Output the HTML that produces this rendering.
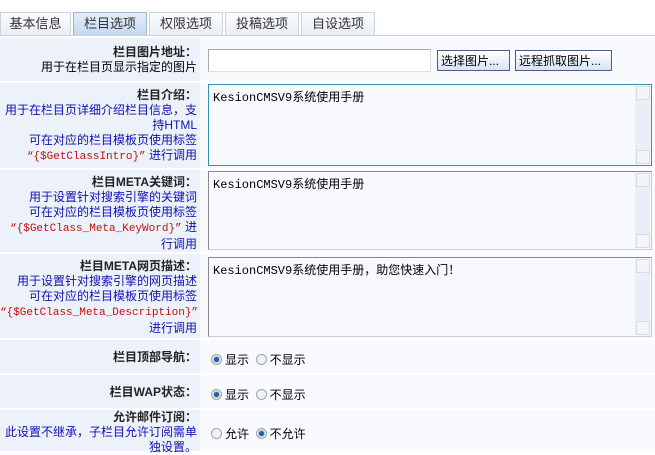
<!DOCTYPE html><html><head><meta charset="utf-8"><style>
body{margin:0;width:655px;height:451px;overflow:hidden;background:#fff;font-family:"Liberation Sans","Noto Sans CJK SC",sans-serif;font-size:12px;position:relative}
.tab{position:absolute;top:12px;height:22px;line-height:22px;text-align:center;border:1px solid #c9d3dd;border-bottom:none;background:linear-gradient(#fbfcfd,#e9eef3);color:#333;font-size:13px}
.tab.on{background:linear-gradient(#e4eef9,#c5d9ef);border-color:#9fb6cf}
.line{position:absolute;top:35px;left:0;width:655px;height:1px;background:#c9d3dd}
.row{position:absolute;left:0;width:655px;background:#f8fafe}
.lab{position:absolute;left:0;top:0;bottom:0;width:200px;background:#edf2fa;text-align:right;box-sizing:border-box;padding-right:3px;line-height:15px;font-size:12px}
b{color:#222}
.blue{color:#1010b0}.red{color:#c01010;font-family:"Liberation Mono","Noto Sans CJK SC",monospace;font-size:11px}
.ta{position:absolute;left:208px;width:444px;box-sizing:border-box;border:1px solid #999;background:#f7f9fc;font-family:"Liberation Mono","Noto Sans CJK SC",monospace;font-size:12px;padding:3px 4px}
.sb{position:absolute;right:1px;top:1px;bottom:1px;width:15px;background:#eaeef6}
.sb:before,.sb:after{content:"";position:absolute;left:1px;width:12px;height:12px;border:1px solid #d6dce6;background:#f3f5f9}
.sb:before{top:0}.sb:after{bottom:0}
.btn{position:absolute;top:50px;height:21px;border:1px solid #4a5f8a;background:linear-gradient(#fff,#d7e3f6);font-size:12px;line-height:20px;padding:0 3px;box-sizing:border-box}
.rad{position:absolute;left:211px;font-size:12px}
.r{display:inline-block;width:9px;height:9px;border-radius:50%;border:1px solid #9aa;background:#f2f2f2;vertical-align:-1px;margin-right:3px}
.r.on{background:radial-gradient(#235ea6 35%,#bcd 45%,#eee 70%)}
</style></head><body>
<div class="tab" style="left:0;width:69px">基本信息</div>
<div class="tab on" style="left:73px;width:72px">栏目选项</div>
<div class="tab" style="left:149px;width:72px">权限选项</div>
<div class="tab" style="left:225px;width:72px">投稿选项</div>
<div class="tab" style="left:301px;width:72px">自设选项</div>
<div class="line"></div>

<div class="row" style="top:38px;height:43px"><div class="lab" style="padding-top:7px"><b>栏目图片地址：</b><br>用于在栏目页显示指定的图片</div></div>
<div style="position:absolute;left:208px;top:49px;width:223px;height:23px;border:1px solid #aaa;border-right-color:#ddd;border-bottom-color:#ddd;box-sizing:border-box;background:#fff"></div>
<div class="btn" style="left:437px;width:73px">选择图片...</div>
<div class="btn" style="left:515px;width:97px">远程抓取图片...</div>

<div class="row" style="top:83px;height:85px"><div class="lab" style="padding-top:5px"><b>栏目介绍：</b><br><span class="blue">用于在栏目页详细介绍栏目信息，支持HTML<br>可在对应的栏目模板页使用标签<br></span><span class="red">“{$GetClassIntro}”</span><span class="blue"> 进行调用</span></div></div>
<div class="ta" style="top:84px;height:82px;border-color:#3a8fb0">KesionCMSV9系统使用手册<div class="sb"></div></div>

<div class="row" style="top:170px;height:82px"><div class="lab" style="padding-top:5px"><b>栏目META关键词：</b><br><span class="blue">用于设置针对搜索引擎的关键词<br>可在对应的栏目模板页使用标签<br></span><span class="red">“{$GetClass_Meta_KeyWord}”</span><span class="blue"> 进行调用</span></div></div>
<div class="ta" style="top:171px;height:79px;border-color:#888 #ccc #ccc #888">KesionCMSV9系统使用手册<div class="sb"></div></div>

<div class="row" style="top:254px;height:84px"><div class="lab" style="padding-top:5px"><b>栏目META网页描述：</b><br><span class="blue">用于设置针对搜索引擎的网页描述<br>可在对应的栏目模板页使用标签<br></span><span class="red">“{$GetClass_Meta_Description}”</span><span class="blue"> 进行调用</span></div></div>
<div class="ta" style="top:257px;height:80px;border-color:#888 #ccc #ccc #888">KesionCMSV9系统使用手册，助您快速入门！<div class="sb"></div></div>

<div class="row" style="top:340px;height:33px"><div class="lab" style="padding-top:10px"><b>栏目顶部导航：</b></div></div>
<div class="rad" style="top:351px"><span class="r on"></span>显示 &nbsp;<span class="r"></span>不显示</div>

<div class="row" style="top:375px;height:33px"><div class="lab" style="padding-top:10px"><b>栏目WAP状态：</b></div></div>
<div class="rad" style="top:386px"><span class="r on"></span>显示 &nbsp;<span class="r"></span>不显示</div>

<div class="row" style="top:410px;height:41px"><div class="lab" style="padding-top:0px"><b>允许邮件订阅：</b><br><span class="blue">此设置不继承，子栏目允许订阅需单独设置。</span></div></div>
<div class="rad" style="top:425px"><span class="r"></span>允许 &nbsp;<span class="r on"></span>不允许</div>
</body></html>
